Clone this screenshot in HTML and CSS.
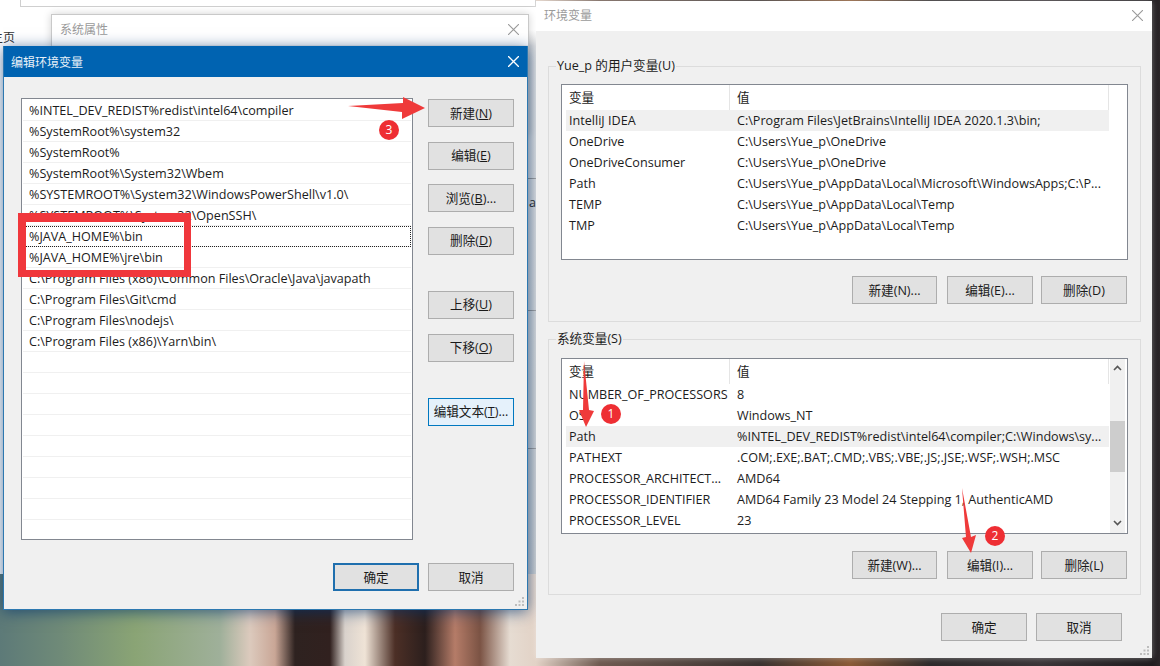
FILE: index.html
```html
<!DOCTYPE html>
<html lang="zh-CN">
<head>
<meta charset="utf-8">
<title>环境变量</title>
<link rel="stylesheet" href="styles.css">
</head>
<body>
<div class="desktop">
  <div class="page">
    <span class="page-text">主页</span>
    <span class="page-a">a</span>
  </div>
  <div class="top-window"></div>

  <section class="window back-window">
    <header class="titlebar inactive">
      <span>系统属性</span>
      <svg class="close" viewBox="0 0 10 10"><path d="M0 0L10 10M10 0L0 10"/></svg>
    </header>
  </section>

  <section class="window edit-window">
    <header class="titlebar active">
      <span>编辑环境变量</span>
      <svg class="close" viewBox="0 0 10 10"><path d="M0 0L10 10M10 0L0 10"/></svg>
    </header>
    <div class="edit-body">
      <div class="edit-main">
        <div class="path-list">
          <div class="path-row">%INTEL_DEV_REDIST%redist\intel64\compiler</div>
          <div class="path-row">%SystemRoot%\system32</div>
          <div class="path-row">%SystemRoot%</div>
          <div class="path-row">%SystemRoot%\System32\Wbem</div>
          <div class="path-row">%SYSTEMROOT%\System32\WindowsPowerShell\v1.0\</div>
          <div class="path-row">%SYSTEMROOT%\System32\OpenSSH\</div>
          <div class="path-row focused">%JAVA_HOME%\bin</div>
          <div class="path-row">%JAVA_HOME%\jre\bin</div>
          <div class="path-row">C:\Program Files (x86)\Common Files\Oracle\Java\javapath</div>
          <div class="path-row">C:\Program Files\Git\cmd</div>
          <div class="path-row">C:\Program Files\nodejs\</div>
          <div class="path-row">C:\Program Files (x86)\Yarn\bin\</div>
          <div class="path-row"></div>
          <div class="path-row"></div>
          <div class="path-row"></div>
          <div class="path-row"></div>
          <div class="path-row"></div>
          <div class="path-row"></div>
          <div class="path-row"></div>
          <div class="path-row"></div>
        </div>
        <div class="edit-actions">
          <div class="btn-group">
            <button class="btn">新建(<u>N</u>)</button>
            <button class="btn">编辑(<u>E</u>)</button>
            <button class="btn">浏览(<u>B</u>)...</button>
            <button class="btn">删除(<u>D</u>)</button>
          </div>
          <div class="btn-group move-group">
            <button class="btn">上移(<u>U</u>)</button>
            <button class="btn">下移(<u>O</u>)</button>
          </div>
          <button class="btn focus-btn">编辑文本(<u>T</u>)...</button>
        </div>
      </div>
      <div class="dialog-footer edit-footer">
        <button class="btn default-btn">确定</button>
        <button class="btn">取消</button>
      </div>
    </div>
    <svg class="grip" viewBox="0 0 9 9"><path d="M7 0h2v2H7zM7 3.500h2v2H7zM3.500 3.500h2v2h-2zM7 7h2v2H7zM3.500 7h2v2h-2zM0 7h2v2H0z"/></svg>
  </section>

  <section class="window env-window">
    <header class="titlebar inactive">
      <span>环境变量</span>
      <svg class="close" viewBox="0 0 10 10"><path d="M0 0L10 10M10 0L0 10"/></svg>
    </header>
    <div class="env-body">
      <fieldset class="group user-group">
        <legend>Yue_p 的用户变量(U)</legend>
        <div class="var-list user-list">
          <div class="var-table">
            <div class="var-head"><span class="col-name">变量</span><span class="col-value">值</span></div>
            <div class="var-row selected"><span class="col-name">IntelliJ IDEA</span><span class="col-value">C:\Program Files\JetBrains\IntelliJ IDEA 2020.1.3\bin;</span></div>
            <div class="var-row"><span class="col-name">OneDrive</span><span class="col-value">C:\Users\Yue_p\OneDrive</span></div>
            <div class="var-row"><span class="col-name">OneDriveConsumer</span><span class="col-value">C:\Users\Yue_p\OneDrive</span></div>
            <div class="var-row"><span class="col-name">Path</span><span class="col-value">C:\Users\Yue_p\AppData\Local\Microsoft\WindowsApps;C:\P...</span></div>
            <div class="var-row"><span class="col-name">TEMP</span><span class="col-value">C:\Users\Yue_p\AppData\Local\Temp</span></div>
            <div class="var-row"><span class="col-name">TMP</span><span class="col-value">C:\Users\Yue_p\AppData\Local\Temp</span></div>
          </div>
        </div>
        <div class="group-buttons">
          <button class="btn">新建(N)...</button>
          <button class="btn">编辑(E)...</button>
          <button class="btn">删除(D)</button>
        </div>
      </fieldset>
      <fieldset class="group system-group">
        <legend>系统变量(S)</legend>
        <div class="var-list system-list">
          <div class="var-table">
            <div class="var-head"><span class="col-name">变量</span><span class="col-value">值</span></div>
            <div class="var-row"><span class="col-name">NUMBER_OF_PROCESSORS</span><span class="col-value">8</span></div>
            <div class="var-row"><span class="col-name">OS</span><span class="col-value">Windows_NT</span></div>
            <div class="var-row selected"><span class="col-name">Path</span><span class="col-value">%INTEL_DEV_REDIST%redist\intel64\compiler;C:\Windows\sy...</span></div>
            <div class="var-row"><span class="col-name">PATHEXT</span><span class="col-value">.COM;.EXE;.BAT;.CMD;.VBS;.VBE;.JS;.JSE;.WSF;.WSH;.MSC</span></div>
            <div class="var-row"><span class="col-name">PROCESSOR_ARCHITECT...</span><span class="col-value">AMD64</span></div>
            <div class="var-row"><span class="col-name">PROCESSOR_IDENTIFIER</span><span class="col-value">AMD64 Family 23 Model 24 Stepping 1, AuthenticAMD</span></div>
            <div class="var-row"><span class="col-name">PROCESSOR_LEVEL</span><span class="col-value">23</span></div>
          </div>
          <div class="scrollbar">
            <svg class="scroll-arrow" viewBox="0 0 9 6"><path d="M1 5L4.500 1.500L8 5"/></svg>
            <div class="scroll-thumb"></div>
            <svg class="scroll-arrow" viewBox="0 0 9 6"><path d="M1 1L4.500 4.500L8 1"/></svg>
          </div>
        </div>
        <div class="group-buttons">
          <button class="btn">新建(W)...</button>
          <button class="btn">编辑(I)...</button>
          <button class="btn">删除(L)</button>
        </div>
      </fieldset>
      <div class="dialog-footer env-footer">
        <button class="btn">确定</button>
        <button class="btn">取消</button>
      </div>
    </div>
    <svg class="grip" viewBox="0 0 9 9"><path d="M7 0h2v2H7zM7 3.500h2v2H7zM3.500 3.500h2v2h-2zM7 7h2v2H7zM3.500 7h2v2h-2zM0 7h2v2H0z"/></svg>
  </section>

  <div class="red-box"></div>
  <svg class="arrows" viewBox="0 0 1160 666">
    <path d="M348 106L403 103L403 97L425 108L402 119L402 112Z"/>
    <path d="M584 361L589 410L594 411L586 427L579 410L583 410Z"/>
    <path d="M962 488L971 537L976 535L971 553L962 538L966 537Z"/>
  </svg>
  <div class="badge badge-1">1</div>
  <div class="badge badge-2">2</div>
  <div class="badge badge-3">3</div>
</div>
</body>
</html>
```

FILE: styles.css
```css
* {
  box-sizing: border-box;
}

html,
body {
  margin: 0;
  height: 100%;
  overflow: hidden;
}

body {
  font-family: "Open Sans", "Noto Sans CJK SC", sans-serif;
  font-size: 12.6px;
  color: #1c1c1c;
}

.desktop {
  position: relative;
  width: 1160px;
  height: 666px;
  overflow: hidden;
  background:
    linear-gradient(90deg,
      #5d7a78 0,
      #6f8a78 60px,
      #8aa475 135px,
      #9fb09a 220px,
      #dccabd 250px,
      #c9a696 275px,
      #2e2220 295px,
      #31211f 330px,
      #d9d2cc 345px,
      #efe3d6 365px,
      #4c2f26 395px,
      #2c1f1d 425px,
      #b57c68 455px,
      #7b5344 480px,
      #e6dcd2 510px,
      #e2d2c6 536px,
      #6e5a50 600px,
      #3a3230 760px,
      #8a5a36 850px,
      #2d2a2b 930px,
      #3a3538 1040px,
      #1f1c1f 1152px,
      #2a2528 1160px);
}

/* Desktop background window */
.page {
  position: absolute;
  left: 0;
  top: 0;
  width: 536px;
  height: 574px;
  background:
    linear-gradient(#8e8e8e, #8e8e8e) 528px 178px / 8px 1px no-repeat,
    linear-gradient(#8e8e8e, #8e8e8e) 528px 310px / 8px 1px no-repeat,
    linear-gradient(#8e8e8e, #8e8e8e) 528px 448px / 8px 1px no-repeat,
    linear-gradient(180deg, #fff 0, #fff 30px, #d6d8da 46px, #bfc3c7 100%) right top / 8px 100% no-repeat,
    #fff;
}

.page-text {
  position: absolute;
  left: -9px;
  top: 28px;
  color: #333;
  font-size: 12px;
}

.page-a {
  position: absolute;
  left: 529px;
  top: 194px;
  color: #111;
}

.top-window {
  position: absolute;
  left: 20px;
  top: -10px;
  width: 516px;
  height: 17px;
  border: 1px solid #cfcfcf;
  background: #fff;
}

/* Windows */
.window {
  position: absolute;
  display: flex;
  flex-direction: column;
  background: #f0f0f0;
}

.titlebar {
  display: flex;
  align-items: center;
  justify-content: space-between;
  flex: none;
  font-size: 12px;
}

.titlebar.active {
  height: 31px;
  padding: 0 8px 0 7px;
  background: #0063b1;
  color: #e8f1f8;
}

.titlebar.inactive {
  height: 30px;
  padding: 0 9px 2px 8px;
  background: #fff;
  color: #9a9a9a;
}

.close {
  width: 11px;
  height: 11px;
  fill: none;
  stroke: #9a9a9a;
  stroke-width: 1;
}

.active .close {
  stroke: #fff;
  stroke-width: 1.2;
}

.back-window {
  left: 51px;
  top: 14px;
  width: 478px;
  height: 120px;
  border: 1px solid #c9c9c9;
  box-shadow: 0 0 8px rgba(0, 0, 0, .18);
}

.edit-window {
  left: 3px;
  top: 46px;
  width: 525px;
  height: 564px;
  border: 1px solid #2d78b0;
  border-top: 0;
  box-shadow: 0 2px 14px rgba(0, 50, 110, .65);
}

.env-window {
  left: 536px;
  top: 1px;
  width: 616px;
  height: 657px;
  box-shadow: 0 0 6px rgba(255, 255, 255, .4);
}

.grip {
  position: absolute;
  right: 3px;
  bottom: 3px;
  width: 9px;
  height: 9px;
  fill: #bdbdbd;
}

/* Buttons */
.btn {
  width: 86px;
  height: 28px;
  padding: 0 0 2px;
  border: 1px solid #adadad;
  background: #e1e1e1;
  color: #1a1a1a;
  font: inherit;
}

.focus-btn {
  border-color: #0078c0;
  background: #e5f1fb;
}

.default-btn {
  border: 2px solid #1f6fae;
}

/* Edit dialog */
.edit-body {
  padding: 21px 13px 0 17px;
}

.edit-main {
  display: flex;
  gap: 15px;
}

.path-list {
  width: 392px;
  height: 442px;
  padding: 1px;
  border: 1px solid #828790;
  background: #fff;
}

.path-row {
  height: 21px;
  padding-left: 6px;
  border-bottom: 1px solid #f0f0f0;
  line-height: 22px;
  white-space: nowrap;
}

.path-row.focused {
  outline: 1px dotted #222;
  outline-offset: -1px;
}

.edit-actions {
  display: flex;
  flex-direction: column;
  padding-top: 1px;
}

.btn-group {
  display: flex;
  flex-direction: column;
  gap: 14.67px;
}

.move-group {
  margin-top: 36px;
}

.focus-btn {
  margin-top: 36px;
}

.dialog-footer {
  display: flex;
  justify-content: flex-end;
  gap: 9px;
}

.edit-footer {
  margin-top: 23px;
}

/* Environment dialog */
.env-body {
  padding: 27px 11px 0 12px;
}

.group {
  margin: 0;
  padding: 10px 11px 17px 12px;
  border: 1px solid #dcdcdc;
  min-width: 0;
}

.group legend {
  margin-left: -5px;
  padding: 0 1px;
  line-height: 16px;
}

.system-group {
  margin-top: 9px;
  padding-top: 11px;
  padding-bottom: 15px;
}

.var-list {
  display: flex;
  width: 567px;
  padding-left: 4px;
  border: 1px solid #828790;
  background: #fff;
}

.user-list {
  height: 176px;
}

.system-list {
  height: 176px;
  padding-right: 2px;
}

.var-table {
  width: 543px;
  flex: none;
}

.var-head,
.var-row {
  display: flex;
  white-space: nowrap;
}

.var-head {
  height: 25px;
  line-height: 25px;
  border-right: 1px solid #e5e5e5;
}

.var-head .col-name {
  border-right: 1px solid #e5e5e5;
}

.var-row {
  height: 21px;
  line-height: 21px;
}

.var-row.selected {
  background: #f0f0f0;
}

.col-name {
  width: 164px;
  padding-left: 3px;
  flex: none;
  overflow: hidden;
}

.col-value {
  padding-left: 7px;
}

.scrollbar {
  display: flex;
  flex-direction: column;
  align-items: center;
  width: 15px;
  margin-left: auto;
  background: #f0f0f0;
  padding: 6px 0 7px;
}

.scroll-arrow {
  width: 9px;
  height: 6px;
  fill: none;
  stroke: #555;
  stroke-width: 1.6;
  flex: none;
}

.scroll-thumb {
  width: 15px;
  height: 51px;
  margin-top: 50px;
  margin-bottom: auto;
  background: #cdcdcd;
}

.group-buttons {
  display: flex;
  justify-content: flex-end;
  gap: 10px;
  width: 566px;
  margin-top: 16px;
}

.system-group .group-buttons {
  margin-top: 17px;
}

.group-buttons .btn:first-child {
  width: 85px;
}

.group-buttons .btn:last-child {
  margin-left: -2px;
}

.env-footer {
  margin: 18px 19px 0 0;
}

/* Annotations */
.red-box {
  position: absolute;
  left: 18px;
  top: 213px;
  width: 173px;
  height: 64px;
  border: solid #f0373c;
  border-width: 9px 7px 7px 8px;
}

.arrows {
  position: absolute;
  left: 0;
  top: 0;
  width: 1160px;
  height: 666px;
  fill: #ef3a3a;
  pointer-events: none;
}

.badge {
  position: absolute;
  display: flex;
  align-items: center;
  justify-content: center;
  width: 20px;
  height: 20px;
  border-radius: 50%;
  background: #ee2e33;
  color: #fff;
  font-size: 12px;
  line-height: 1;
}

.badge-1 {
  left: 601px;
  top: 404px;
}

.badge-2 {
  left: 985px;
  top: 526px;
}

.badge-3 {
  left: 379px;
  top: 120px;
}
```
